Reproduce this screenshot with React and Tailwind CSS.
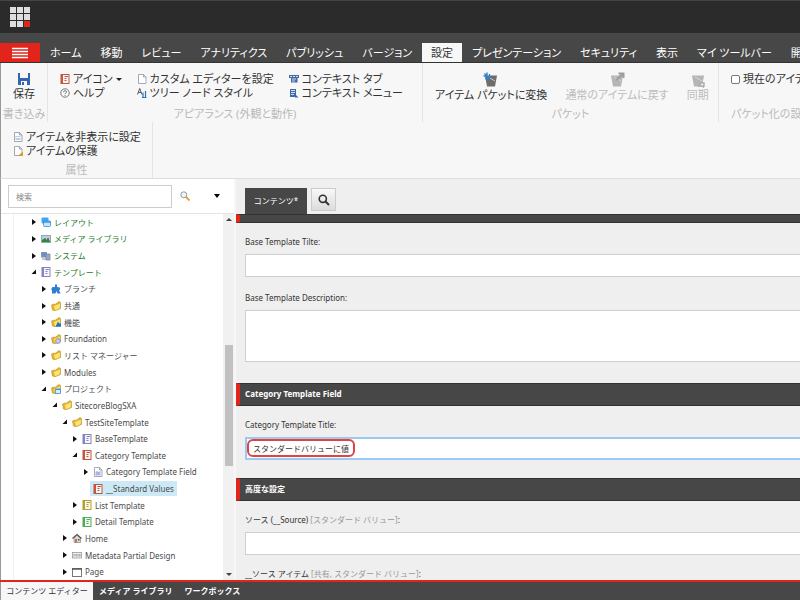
import React from "react";

const TABS = [
  "ホーム", "移動", "レビュー", "アナリティクス", "パブリッシュ", "バージョン", "設定",
  "プレゼンテーション", "セキュリティ", "表示", "マイ ツールバー", "開発者",
];

const INDENT = ["pl-[17px]", "pl-[27px]", "pl-[38px]", "pl-[48px]", "pl-[58px]", "pl-[69px]"];

const TREE = [
  { level: 0, icon: "layout", label: "レイアウト", green: true },
  { level: 0, icon: "media", label: "メディア ライブラリ", green: true },
  { level: 0, icon: "system", label: "システム", green: true },
  { level: 0, icon: "violet", label: "テンプレート", green: true, open: true },
  { level: 1, icon: "branch", label: "ブランチ" },
  { level: 1, icon: "folder", label: "共通" },
  { level: 1, icon: "folderFeature", label: "機能" },
  { level: 1, icon: "folderFoundation", label: "Foundation" },
  { level: 1, icon: "folder", label: "リスト マネージャー" },
  { level: 1, icon: "folder", label: "Modules" },
  { level: 1, icon: "folderProject", label: "プロジェクト", open: true },
  { level: 2, icon: "folder", label: "SitecoreBlogSXA", open: true },
  { level: 3, icon: "folder", label: "TestSiteTemplate", open: true },
  { level: 4, icon: "violet", label: "BaseTemplate" },
  { level: 4, icon: "red", label: "Category Template", open: true },
  { level: 5, icon: "section", label: "Category Template Field" },
  { level: 5, icon: "red", label: "__Standard Values", leaf: true, selected: true },
  { level: 4, icon: "yellow", label: "List Template" },
  { level: 4, icon: "green", label: "Detail Template" },
  { level: 3, icon: "home", label: "Home" },
  { level: 3, icon: "meta", label: "Metadata Partial Design" },
  { level: 3, icon: "page", label: "Page" },
];

const SHEET_COLORS = { violet: "#8484c4", red: "#c4573a", yellow: "#b9a02c", green: "#4caf50" };

function Sheet({ color }) {
  return (
    <>
      <rect x="1" y="0.5" width="8" height="9" fill="#f6f6fb" stroke={color} />
      <rect x="1" y="0.5" width="2" height="9" fill={color} />
      <path d="M4.500 2.500h3.500M4.500 4.500h2M4.500 6.500h2" stroke={color} />
    </>
  );
}

function Folder() {
  return (
    <>
      <path d="M0.5 4 3 3l1 0.500L8 0.500l1.500 1v6L4 9.700 1.500 9z" fill="#e3b62c" stroke="#b98d1c" strokeWidth="0.6" />
      <path d="M3 5 9.200 2.500 8.600 7.300 4 9.200z" fill="#fbe476" />
    </>
  );
}

function Doc({ children }) {
  return (
    <>
      <path d="M1.5 0.5h5l2.5 2.5v6.5h-7.5z" fill="#fff" stroke="#8d95a5" strokeWidth="0.8" />
      <path d="M6.5 0.5v2.5h2.5" fill="none" stroke="#8d95a5" strokeWidth="0.8" />
      {children}
    </>
  );
}

function Glyph({ name }) {
  if (SHEET_COLORS[name]) return <Sheet color={SHEET_COLORS[name]} />;
  switch (name) {
    case "layout":
      return (
        <>
          <rect x="0.5" y="0.5" width="7" height="6" rx="1" fill="#46a4ec" />
          <rect x="2.5" y="4" width="7" height="5.5" rx="1" fill="#c9e6fb" stroke="#2b8fe0" strokeWidth="0.8" />
          <path d="M2.5 5h7" stroke="#2b8fe0" strokeWidth="1.4" />
        </>
      );
    case "media":
      return (
        <>
          <rect y="1" width="10" height="8" fill="#9aa6b0" />
          <rect x="1" y="2" width="8" height="6" fill="#a8d5ee" />
          <path d="M1 8V6l3-2 2 2 1-1 2 2v1z" fill="#2c8a3c" />
          <rect x="6" y="4" width="2" height="2" fill="#c9512e" />
        </>
      );
    case "system":
      return (
        <>
          <rect x="0.5" y="1.5" width="5" height="4.5" fill="#6a8fd0" stroke="#8a94a8" />
          <rect x="5" y="3" width="4" height="6" fill="#9aa8c4" stroke="#6f7f9c" strokeWidth="0.7" />
          <path d="M1 8h4" stroke="#8a94a8" />
        </>
      );
    case "branch":
      return <path d="M4 0.5h2v2.5l3 0.5v2.5H8L9.5 9.500H6.5L5.5 7 4.5 9.500H1V6L0 5.5 1.5 3H4z" fill="#2f7fcf" />;
    case "folder":
      return <Folder />;
    case "folderFeature":
      return (<><Folder /><path d="M4.500 9.700 7 4.5l1 2h2v3.200z" fill="#1f6fc9" /></>);
    case "folderFoundation":
      return (<><Folder /><circle cx="7" cy="7" r="2.4" fill="#c9ccea" stroke="#7d84b8" strokeWidth="0.8" /></>);
    case "folderProject":
      return (<><Folder /><rect x="4.5" y="5" width="5" height="4.5" fill="#d8ebfb" stroke="#3f94e0" strokeWidth="0.8" /><path d="M4.5 5.5h5" stroke="#3f94e0" /></>);
    case "section":
      return <Doc><path d="M2.5 8.5V5l1.5-1 1.5 1 2-1v4.5z" fill="#aab4ec" /></Doc>;
    case "home":
      return (
        <>
          <path d="M2 5v4.5h6.5V5L5 2z" fill="#d8d8d8" stroke="#777" strokeWidth="0.6" />
          <path d="M0.5 5.5 5 1.5 9.5 5.5" fill="none" stroke="#555" strokeWidth="1.2" />
          <rect x="3" y="6" width="2" height="3.5" fill="#d5702c" />
          <rect x="6" y="6" width="1.5" height="1.5" fill="#456" />
        </>
      );
    case "meta":
      return (
        <>
          <rect x="0.5" y="2.5" width="9" height="5.5" fill="#eee" stroke="#999" strokeWidth="0.8" />
          <path d="M2 4v2.5M4 4v2.5M5 4v2.5M7 4v2.5M8 4v2.5" stroke="#888" strokeWidth="0.8" />
        </>
      );
    case "page":
      return (
        <>
          <rect x="0.5" y="1.5" width="9" height="8" fill="#fff" stroke="#777" />
          <path d="M0 2h10" stroke="#555" strokeWidth="1.5" />
        </>
      );
    case "doc":
      return <Doc />;
    case "hide":
      return <Doc><rect x="2.5" y="4" width="5" height="4" fill="#b8cdea" /><path d="M3 5.5h4" stroke="#fff" /></Doc>;
    case "protect":
      return <Doc><path d="M6 9.5 9.5 6.5v3z" fill="#e9a72a" stroke="#d8951b" /></Doc>;
    case "help":
      return (
        <>
          <circle cx="5" cy="5" r="4.2" fill="#fff" stroke="#666" strokeWidth="0.9" />
          <path d="M3.6 4.2c0-2 2.9-1.8 2.9-0.2C6.5 5.1 5 5 5 6.2M5 7v0.9" fill="none" stroke="#555" strokeWidth="0.9" />
        </>
      );
    case "style":
      return (
        <>
          <path d="M0.5 6.5 2.7 0.5 5 6.5M1.3 4.5H4" fill="none" stroke="#556" strokeWidth="1" />
          <path d="M6 9.5V4.500M5 9.500H9.500M8.5 3v6.5" stroke="#2f6fc0" strokeWidth="1.2" />
        </>
      );
    case "ctab":
      return (
        <>
          <path d="M0 1h10v3H8.500v4.5h-6.500V4H0z" fill="#3f68ad" />
          <path d="M1 2.5h2M4 2.5h2M7 2.5h2M3 5h4M3 7h3" stroke="#fff" strokeWidth="0.8" />
        </>
      );
    case "cmenu":
      return (
        <>
          <path d="M1 1h6v8H1z" fill="#3f68ad" />
          <path d="M2 2.5h4M2 4.5h4M2 6.5h3" stroke="#fff" strokeWidth="0.8" />
          <path d="M5 5l4.5 4.5H6z" fill="#3f68ad" />
        </>
      );
    default:
      return null;
  }
}

function Icon({ name }) {
  return (
    <svg viewBox="0 0 10 10" className="size-[10px] shrink-0" aria-hidden="true">
      <Glyph name={name} />
    </svg>
  );
}

function Bucket({ kind }) {
  const body = kind === "convert" ? "#6d6d6d" : "#b5b5b5";
  return (
    <svg viewBox="0 0 16 16" className="size-4" aria-hidden="true">
      <path d="M2 3.5h12L12 14.5H4z" fill={body} />
      <path d="M5 5l7 4" stroke="#ddd" strokeWidth="0.8" />
      {kind === "convert" && <path d="M1.500 1.500l5 5M6.500 2v4.500H2M4 0.500v3.500H0.500" fill="none" stroke="#2f82cf" strokeWidth="1.4" />}
      {kind === "revert" && <path d="M7.500 8l6-6M9.500 1.500H14.500V6" fill="none" stroke="#9c9c9c" strokeWidth="2" />}
      {kind === "sync" && <path d="M9 11h5v3h-5l1.5-2M14 14l-1 1.5" fill="#f7f7f7" stroke="#aaa" strokeWidth="1.4" />}
    </svg>
  );
}

function Group({ label, className = "", labelClass = "text-center", children }) {
  return (
    <section className={`flex shrink-0 flex-col border-r border-[#e4e4e4] ${className}`}>
      <div className="flex flex-1">{children}</div>
      <div className={`leading-4 text-[#b9b9b9] ${labelClass}`}>{label}</div>
    </section>
  );
}

function Small({ icon, children, caret }) {
  return (
    <button type="button" className="flex h-[14px] items-center gap-[3px] leading-[14px]">
      <Icon name={icon} />
      <span>{children}</span>
      {caret && <span className="border-x-[3px] border-t-[3px] border-x-transparent border-t-[#222]" />}
    </button>
  );
}

function Big({ kind, children, disabled }) {
  return (
    <button type="button" disabled={disabled} className="flex flex-col items-center disabled:text-[#bcbcbc]">
      <Bucket kind={kind} />
      <span className="leading-[14px]">{children}</span>
    </button>
  );
}

function TreeRow({ item }) {
  return (
    <li className={`flex min-h-0 flex-1 items-center ${INDENT[item.level]}`} role="treeitem" aria-selected={!!item.selected}>
      <span className="flex w-[7px] shrink-0 justify-start">
        {!item.leaf && (
          <svg viewBox="0 0 6 6" className="size-[6px]" aria-hidden="true">
            <path d={item.open ? "M5 0.5V5H0.5z" : "M1 0l4 3-4 3z"} fill="#111" />
          </svg>
        )}
      </span>
      <a
        href="#item"
        className={`flex h-[15px] items-center gap-[3px] px-[3px] leading-[15px] whitespace-nowrap ${item.selected ? "bg-[#cce9f5]" : ""} ${item.green ? "text-[#1e7b2c]" : "text-[#4b4b4b]"}`}
      >
        <Icon name={item.icon} />
        {item.label}
      </a>
    </li>
  );
}

function SectionBar({ children }) {
  return (
    <h2 className="flex h-[23px] items-center border-y border-l-4 border-y-[#333] border-l-[#e1251b] bg-[#474747] pb-[2px] pl-[5px] font-bold text-white">
      {children}
    </h2>
  );
}

const LABEL = "block h-[25px] leading-[25px]";
const FIELD = "block w-full border border-r-0 border-[#cfcfcf] bg-white px-2 outline-none";

export default function App() {
  return (
    <div
      lang="ja"
      className="flex h-screen flex-col overflow-hidden bg-[#efefef] font-['Noto_Sans','Noto_Sans_CJK_JP',sans-serif] text-[8px] text-[#333]"
    >
      <header className="shrink-0">
        <div className="flex h-[33px] items-center border-t border-[#444] bg-[#2b2b2b] pl-[10px]">
          <div className="grid grid-cols-3 gap-px">
            {Array.from({ length: 9 }, (_, i) => (
              <span key={i} className={`size-[6px] ${i === 8 ? "bg-[#e1251b]" : "bg-[#dedede]"}`} />
            ))}
          </div>
        </div>
        <nav className="flex h-[30px] items-end gap-px overflow-hidden border-b border-[#333] bg-[#474747] text-[11px] text-white [font-feature-settings:'palt']">
          <button type="button" aria-label="メニュー" className="flex h-[19px] w-10 shrink-0 items-center justify-center bg-[#e1251b]">
            <svg viewBox="0 0 16 12" className="h-3 w-4" aria-hidden="true">
              <path d="M0 1.500h16M0 4.500h16M0 7.500h16M0 10.500h16" stroke="#fff" strokeWidth="1.400" />
            </svg>
          </button>
          {TABS.map((t) => (
            <button
              key={t}
              type="button"
              className={`h-[19px] shrink-0 px-[9px] leading-[19px] whitespace-nowrap ${t === "設定" ? "bg-[#f7f7f7] text-[#333]" : ""}`}
            >
              {t}
            </button>
          ))}
        </nav>
      </header>

      <div className="shrink-0 overflow-hidden border-b border-l border-b-[#ddd] border-l-[#999] bg-[#f7f7f7] text-[11px] whitespace-nowrap [font-feature-settings:'palt']">
        <div className="flex h-[59px]">
          <Group label="書き込み" className="w-[47px]">
            <button type="button" className="flex w-full flex-col items-center gap-px pt-[9px]">
              <svg viewBox="0 0 14 14" className="size-[14px]" aria-hidden="true">
                <path d="M1 1h12v12H1z" fill="#3566ad" />
                <path d="M3 1h8v5H3zM4 9h6v4H4z" fill="#f7f7f7" />
                <path d="M5 10h2v3H5z" fill="#3566ad" />
              </svg>
              <span className="leading-[14px]">保存</span>
            </button>
          </Group>
          <Group label="アピアランス (外観と動作)" className="w-[375px]">
            <div className="flex gap-[15px] pt-[9px] pl-3">
              <div>
                <Small icon="red" caret>アイコン</Small>
                <Small icon="help">ヘルプ</Small>
              </div>
              <div>
                <Small icon="doc">カスタム エディターを設定</Small>
                <Small icon="style">ツリー ノード スタイル</Small>
              </div>
              <div>
                <Small icon="ctab">コンテキスト タブ</Small>
                <Small icon="cmenu">コンテキスト メニュー</Small>
              </div>
            </div>
          </Group>
          <Group label="パケット" className="w-[296px]">
            <div className="flex items-start gap-[18px] pt-[9px] pl-3">
              <Big kind="convert">アイテム パケットに変換</Big>
              <Big kind="revert" disabled>通常のアイテムに戻す</Big>
              <Big kind="sync" disabled>同期</Big>
            </div>
          </Group>
          <Group label="パケット化の設定" className="pl-3" labelClass="text-left">
            <label className="flex h-8 items-center gap-[3px]">
              <input type="checkbox" className="size-[9px] appearance-none rounded-xs border border-[#777] bg-white" />
              現在のアイテム
            </label>
          </Group>
        </div>
        <div className="flex h-[56px]">
          <Group label="属性" className="w-[152px]">
            <div className="pt-2 pl-3">
              <Small icon="hide">アイテムを非表示に設定</Small>
              <Small icon="protect">アイテムの保護</Small>
            </div>
          </Group>
        </div>
      </div>

      <main className="flex min-h-0 flex-1">
        <aside className="flex w-[236px] shrink-0 flex-col border-r-2 border-l border-r-[#f7f7f7] border-l-[#999] bg-white">
          <form className="flex h-[35px] shrink-0 items-center border-b border-[#e4e4e4] pl-[7px]">
            <input aria-label="検索" placeholder="検索" className="h-[23px] w-[164px] border border-[#ccc] px-[7px] outline-none placeholder:text-[#888]" />
            <button type="button" aria-label="検索" className="ml-2">
              <svg viewBox="0 0 10 10" className="size-[10px]" aria-hidden="true">
                <circle cx="3.8" cy="3.8" r="3" fill="#eef5fb" stroke="#8b98a5" />
                <path d="M6 6l3.5 3.5" stroke="#e79a2c" strokeWidth="1.8" />
              </svg>
            </button>
            <button type="button" aria-label="検索オプション" className="ml-6 border-x-[3px] border-t-4 border-x-transparent border-t-black" />
          </form>
          <div className="flex min-h-0 flex-1">
            <ul role="tree" className="ml-3 flex min-w-0 flex-1 flex-col border-l border-[#f1f1f1]">
              {TREE.map((item) => (
                <TreeRow key={item.label} item={item} />
              ))}
            </ul>
            <div className="flex w-[11px] flex-col items-center bg-[#f1f1f1] py-1" aria-hidden="true">
              <span className="border-x-[3px] border-b-[3px] border-x-transparent border-b-[#444]" />
              <span className="flex-[124]" />
              <span className="w-2 flex-[120] bg-[#c1c1c1]" />
              <span className="flex-[107]" />
              <span className="border-x-[3px] border-t-[3px] border-x-transparent border-t-[#444]" />
            </div>
          </div>
        </aside>

        <div className="min-w-0 flex-1 overflow-hidden">
          <div className="flex h-[35px] items-end gap-1 pl-[9px]">
            <button type="button" className="h-[26px] w-[62px] bg-[#474747] text-white">コンテンツ*</button>
            <button
              type="button"
              aria-label="コンテンツを検索"
              className="mb-[3px] flex h-[23px] w-[25px] items-center justify-center border border-[#ccc] bg-linear-to-b from-[#f8f8f8] to-[#dcdcdc]"
            >
              <svg viewBox="0 0 12 12" className="size-3" aria-hidden="true">
                <circle cx="4.800" cy="4.800" r="3.600" fill="none" stroke="#333" strokeWidth="1.600" />
                <path d="M7.500 7.500l3.500 3.500" stroke="#333" strokeWidth="2" />
              </svg>
            </button>
          </div>
          <div className="h-[9px] border-y border-l-4 border-y-[#333] border-l-[#e1251b] bg-[#474747]" />

          <div className="pt-[6px] pb-[21px] pl-[9px]">
            <label htmlFor="base-title" className={LABEL}>Base Template Tilte:</label>
            <input id="base-title" className={`${FIELD} h-[23px]`} />
            <label htmlFor="base-description" className={`${LABEL} mt-2`}>Base Template Description:</label>
            <textarea id="base-description" className={`${FIELD} h-[52px] resize-none`} />
          </div>

          <SectionBar>Category Template Field</SectionBar>
          <div className="pt-[6px] pb-[18px] pl-[9px]">
            <label htmlFor="category-title" className={LABEL}>Category Template Title:</label>
            <div className="relative">
              <input
                id="category-title"
                defaultValue="スタンダードバリューに値"
                className="block h-[23px] w-full border-2 border-r-0 border-[#9cc8f2] bg-white px-[6px] outline-none"
              />
              <span className="pointer-events-none absolute top-[2px] left-[2px] h-[18px] w-[108px] rounded-md border-2 border-[#e04343]" />
            </div>
          </div>

          <SectionBar>高度な設定</SectionBar>
          <div className="pt-[6px] pl-[9px]">
            <label htmlFor="source" className={LABEL}>
              ソース (__Source) <span className="text-[#999]">[スタンダード バリュー]</span>:
            </label>
            <input id="source" className={`${FIELD} h-[23px]`} />
            <label htmlFor="source-item" className={`${LABEL} mt-[6px]`}>
              __ソース アイテム <span className="text-[#999]">[共有, スタンダード バリュー]</span>:
            </label>
            <input id="source-item" className={`${FIELD} h-[23px]`} />
          </div>
        </div>
      </main>

      <footer className="flex h-5 shrink-0 border-t-2 border-[#e1251b] bg-[#474747] font-bold text-white">
        <button type="button" className="w-[93px] border-l border-[#999] bg-[#f7f7f7] font-normal text-[#333]">コンテンツ エディター</button>
        <button type="button" className="px-[6px]">メディア ライブラリ</button>
        <button type="button" className="px-[6px]">ワークボックス</button>
      </footer>
    </div>
  );
}
